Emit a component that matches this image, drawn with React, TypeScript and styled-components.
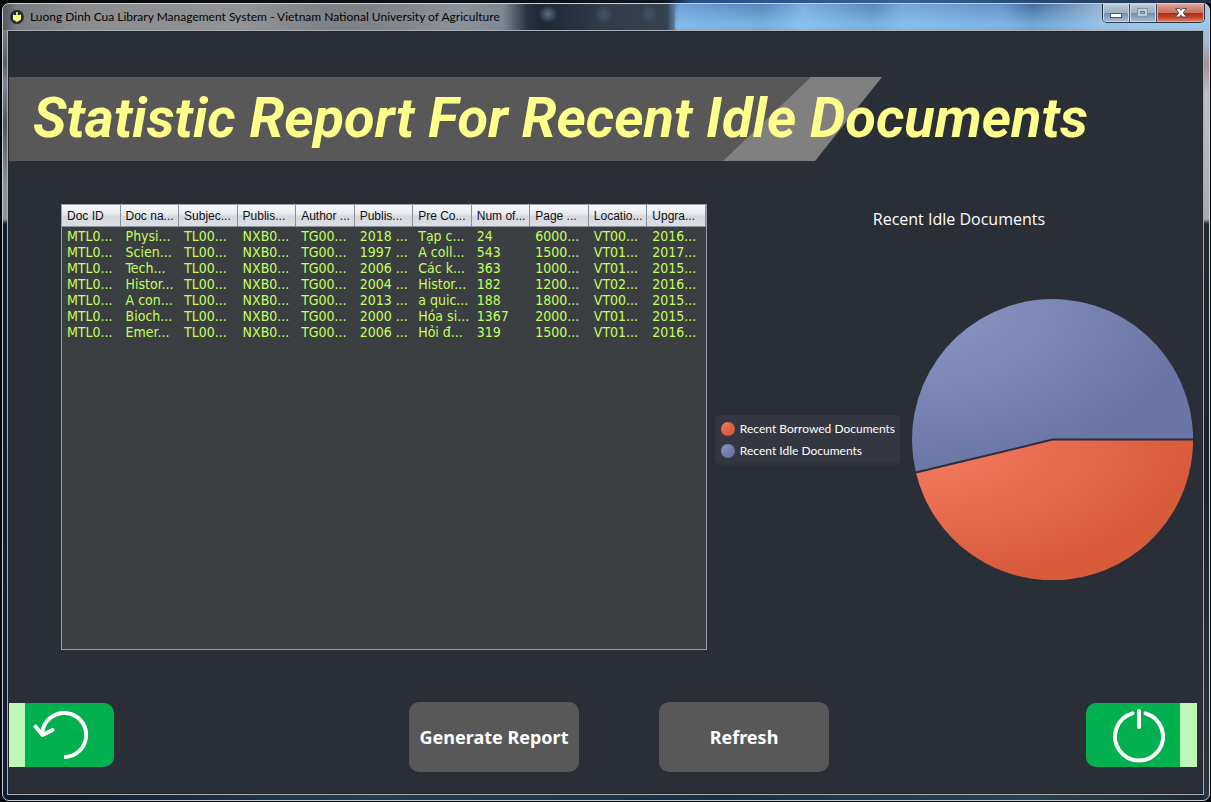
import React from "react";
import styled, { createGlobalStyle } from "styled-components";

const GlobalStyle = createGlobalStyle`
  * { box-sizing: border-box; }
  html, body { margin: 0; padding: 0; background: #0a0d12; }
  button { font: inherit; border: 0; padding: 0; margin: 0; cursor: pointer; }
`;

const Desktop = styled.div`
  display: flex;
  min-height: 100vh;
  padding: 3px 1px 1px 2px;
  background: linear-gradient(90deg, #080808 0, #10161e 55%, #2a5080 57%, #365f92 75%, #1c3048 100%) top / 100% 3px no-repeat, #05080c;
`;

const Window = styled.div`
  flex: 1;
  min-width: 0;
  display: flex;
  flex-direction: column;
  padding: 0 5px 5px 4px;
  border: 1px solid #c9ced3;
  border-radius: 7px;
  background:
    linear-gradient(#8f969d 0, #555d66 60px, #7d8792 78px, #50565d 120px, #8a9198 180px, #8d949b 215px, #10202e 220px, #0e1e30 100%) left / 5px 100% no-repeat,
    linear-gradient(#a9cdea 0, #9fb9d0 40px, #a88c96 60px, #bcc0c5 90px, #a6abb0 215px, #1f2a33 220px, #18252e 60%, #2b3740 100%) right / 5px 100% no-repeat,
    linear-gradient(90deg, #0c1b2b, #243c50 30%, #123244 60%, #2a4252 85%, #1a2833) bottom / 100% 6px no-repeat,
    #24313e;
`;

const TitleBar = styled.header`
  display: flex;
  align-items: flex-start;
  height: 26px;
  margin: 0 -5px 0 -4px;
  padding-left: 7px;
  border-radius: 6px 6px 0 0;
  background:
    radial-gradient(ellipse 10px 9px at 545px 10px, #5a7085, transparent),
    radial-gradient(ellipse 9px 10px at 601px 10px, #425564, transparent),
    radial-gradient(ellipse 9px 10px at 646px 10px, #425564, transparent),
    linear-gradient(transparent 0, #8fd0fa99 80%, #8fc3ec99 100%) 672px 0 / 100% 100% no-repeat,
    linear-gradient(90deg, #555a5f 0, #797c80 14px, #8a8c8f 70px, #919396 240px, #7d8084 330px, #82878d 400px, #8b9299 460px, #7c8791 500px, #273440 524px, #1c2833 540px, #303d49 600px, #36434f 664px, #6f9fd4 676px, #5586b9 760px, #7eaee0 800px, #5686b8 870px, #77a6d8 900px, #648fc5 1000px, #446f9e 1030px, #9fb3cf 1100px, #a8c4de 100%);
`;

const AppIcon = styled.svg`
  flex: none;
  width: 14px;
  height: 14px;
  margin-top: 6px;
`;

const WindowTitle = styled.span`
  flex: 1;
  min-width: 0;
  margin: 4px 0 0 6px;
  overflow: hidden;
  white-space: nowrap;
  color: #050505;
  font: 12px/18px Lato, "Open Sans", sans-serif;
`;

const WindowControls = styled.div`
  display: flex;
  margin-right: 4px;
  height: 19px;
  border: 1px solid #2c3846;
  border-top: 0;
  border-radius: 0 0 5px 5px;
  overflow: hidden;
`;

const ControlButton = styled.button<{ $kind: "plain" | "close" }>`
  display: flex;
  align-items: center;
  justify-content: center;
  width: ${(p) => (p.$kind === "close" ? 47 : 27)}px;
  box-shadow: inset 0 0 0 1px ${(p) => (p.$kind === "close" ? "#e2a294" : "#c9d7e4")};
  border-right: ${(p) => (p.$kind === "close" ? "0" : "1px solid #3f5062")};
  background: ${(p) =>
    p.$kind === "close"
      ? "linear-gradient(#dda194 0, #cb705f 48%, #ad2e18 52%, #c8452b 75%, #e08a63 100%)"
      : "linear-gradient(#b9c8d7 0, #9eb1c5 48%, #7290ad 52%, #a5bfd6 100%)"};
`;

const Client = styled.main`
  flex: 1;
  display: flex;
  flex-direction: column;
  border: 1px solid #a9afb5;
  background: #2a2e36;
  box-shadow: inset 0 0 0 1px #22252c;
`;

const Banner = styled.div`
  position: relative;
  z-index: 0;
  height: 84px;
  margin: 46px 0 0 1px;
  padding-left: 24px;
  &::before, &::after {
    content: "";
    position: absolute;
    z-index: -1;
    top: 0;
    left: 0;
    height: 100%;
    width: 873px;
    background: #808080;
    clip-path: polygon(0 0, 873px 0, 806px 100%, 0 100%);
  }
  &::after {
    background: #585858;
    clip-path: polygon(0 0, 802px 0, 714px 100%, 0 100%);
  }
`;

const Heading = styled.h1`
  margin: 0;
  white-space: nowrap;
  color: #ffff8c;
  font: italic 700 56px/82px Roboto, "Open Sans", sans-serif;
`;

const Content = styled.div`
  flex: 1;
  display: flex;
  gap: 8px;
  margin: 43px 10px 52px 53px;
`;

const TablePane = styled.div`
  flex: 645 1 0;
  min-width: 0;
  min-height: 440px;
  border: 1px solid #9a9ea9;
  background: #3c3f41;
`;

const DataTable = styled.table`
  width: 100%;
  table-layout: fixed;
  border-collapse: separate;
  border-spacing: 0;
`;

const HeadCell = styled.th`
  height: 22px;
  padding: 0 0 0 5px;
  white-space: nowrap;
  text-align: left;
  color: #101010;
  font: 12px/20px "Liberation Sans", Arial, sans-serif;
  border-right: 1px solid #8b8f98;
  border-bottom: 1px solid #8b8f98;
  background: linear-gradient(#fbfbfd 0, #e6e7ec 48%, #d6d8df 52%, #dcdee6 100%);
`;

const Cell = styled.td`
  height: 16px;
  padding: 0 0 0 5px;
  white-space: nowrap;
  color: #c0ff60;
  font: 14px/16px "DejaVu Sans Condensed", "DejaVu Sans", sans-serif;
`;

const Spacer = styled.tbody`
  td { height: 1px; padding: 0; }
`;

const ChartPane = styled.section`
  flex: 479 1 0;
  min-width: 0;
  display: flex;
  flex-direction: column;
`;

const ChartTitle = styled.h2`
  margin: 3px 0 0 10px;
  text-align: center;
  color: #fff;
  font: 400 16px/24px "Open Sans", "Noto Sans", sans-serif;
`;

const ChartBody = styled.div`
  flex: 1;
  display: flex;
  align-items: center;
  gap: 12px;
  padding-bottom: 2px;
`;

const Legend = styled.ul`
  flex: none;
  width: 185px;
  margin: 0;
  padding: 3px 0 3px 6px;
  list-style: none;
  border-radius: 3px;
  background: #343741;
  box-shadow: inset 0 -3px 0 #30333c;
`;

const LegendItem = styled.li`
  display: flex;
  align-items: center;
  gap: 5px;
  color: #fff;
  white-space: nowrap;
  font: 12px/22px Lato, "Open Sans", sans-serif;
`;

const Dot = styled.span<{ $from: string; $to: string }>`
  flex: none;
  width: 14px;
  height: 14px;
  border-radius: 50%;
  background: radial-gradient(circle at 0 0, ${(p) => p.$from}, ${(p) => p.$to} 14px);
`;

const Pie = styled.svg`
  flex: 1;
  min-width: 0;
`;

const Footer = styled.footer`
  display: grid;
  grid-template-columns: 25fr auto 23fr;
  align-items: start;
  margin: 0 6px 22px 1px;
`;

const Actions = styled.div`
  display: flex;
  gap: 80px;
`;

const ActionButton = styled.button`
  width: 170px;
  height: 70px;
  border-radius: 10px;
  background: #585858;
  color: #fff;
  font: 700 18px/24px "Noto Sans", "Open Sans", sans-serif;
  white-space: nowrap;
`;

const EdgeButton = styled.button<{ $side: "left" | "right" }>`
  display: flex;
  justify-self: ${(p) => (p.$side === "left" ? "start" : "end")};
  width: ${(p) => (p.$side === "left" ? 105 : 111)}px;
  height: 64px;
  margin-top: 1px;
  overflow: hidden;
  background: #02b04f;
  ${(p) =>
    p.$side === "left"
      ? "border-left: 16px solid #bcf7b8; border-radius: 0 10px 10px 0;"
      : "border-right: 17px solid #bcf7b8; border-radius: 10px 0 0 10px;"}
`;

const columns = ["Doc ID", "Doc na...", "Subjec...", "Publis...", "Author ...", "Publis...", "Pre Co...", "Num of...", "Page ...", "Locatio...", "Upgra..."];

const rows = [
  ["MTL0...", "Physi...", "TL00...", "NXB0...", "TG00...", "2018 ...", "Tạp c...", "24", "6000...", "VT00...", "2016..."],
  ["MTL0...", "Scien...", "TL00...", "NXB0...", "TG00...", "1997 ...", "A coll...", "543", "1500...", "VT01...", "2017..."],
  ["MTL0...", "Tech...", "TL00...", "NXB0...", "TG00...", "2006 ...", "Các k...", "363", "1000...", "VT01...", "2015..."],
  ["MTL0...", "Histor...", "TL00...", "NXB0...", "TG00...", "2004 ...", "Histor...", "182", "1200...", "VT02...", "2016..."],
  ["MTL0...", "A con...", "TL00...", "NXB0...", "TG00...", "2013 ...", "a quic...", "188", "1800...", "VT00...", "2015..."],
  ["MTL0...", "Bioch...", "TL00...", "NXB0...", "TG00...", "2000 ...", "Hóa si...", "1367", "2000...", "VT01...", "2015..."],
  ["MTL0...", "Emer...", "TL00...", "NXB0...", "TG00...", "2006 ...", "Hỏi đ...", "319", "1500...", "VT01...", "2016..."],
];

const series = [
  { name: "Recent Borrowed Documents", from: "#f67d63", to: "#d85b3c" },
  { name: "Recent Idle Documents", from: "#8d9ac8", to: "#6976a6" },
];

export default function App() {
  return (
    <Desktop>
      <GlobalStyle />
      <Window>
        <TitleBar>
          <AppIcon viewBox="0 0 14 14" aria-hidden="true">
            <circle cx="7" cy="7" r="6.9" fill="#262a35" />
            <path d="M3 4.400l2.400.8V3h3v2.200L11 4.400v5.200L7 11.900 3 9.600z" fill="#ffff8c" />
            <path d="M5 2.500v2.500h4V2.500z" fill="#262a35" />
            <path d="M6.200 2h1.600v3.400H6.200z" fill="#ffff8c" />
          </AppIcon>
          <WindowTitle>Luong Dinh Cua Library Management System - Vietnam National University of Agriculture</WindowTitle>
          <WindowControls>
            <ControlButton $kind="plain" aria-label="Minimize">
              <svg width="14" height="14" viewBox="0 0 14 14">
                <rect x="1.500" y="7.500" width="11" height="4" fill="#fff" stroke="#4a5566" />
              </svg>
            </ControlButton>
            <ControlButton $kind="plain" aria-label="Maximize">
              <svg width="14" height="14" viewBox="0 0 14 14">
                <rect x="1.500" y="2.500" width="10" height="8" fill="#bccbd9" stroke="#8295a8" />
                <rect x="4.500" y="5.500" width="4" height="2" fill="#8ba3ba" stroke="#71869c" />
              </svg>
            </ControlButton>
            <ControlButton $kind="close" aria-label="Close">
              <svg width="14" height="14" viewBox="0 0 14 14">
                <path d="M1.500 2.500h4L7 4.400 8.500 2.500h4L9.200 6.750 12.500 11h-4L7 9.100 5.500 11h-4l3.300-4.250z" fill="#fff" stroke="#4c4f63" />
              </svg>
            </ControlButton>
          </WindowControls>
        </TitleBar>
        <Client>
          <Banner>
            <Heading>Statistic Report For Recent Idle Documents</Heading>
          </Banner>
          <Content>
            <TablePane>
              <DataTable>
                <thead>
                  <tr>{columns.map((c, i) => <HeadCell key={i} scope="col">{c}</HeadCell>)}</tr>
                </thead>
                <Spacer aria-hidden="true"><tr><td colSpan={11} /></tr></Spacer>
                <tbody>
                  {rows.map((r, i) => (
                    <tr key={i}>{r.map((c, j) => <Cell key={j}>{c}</Cell>)}</tr>
                  ))}
                </tbody>
              </DataTable>
            </TablePane>
            <ChartPane>
              <ChartTitle>Recent Idle Documents</ChartTitle>
              <ChartBody>
                <Legend>
                  {series.map((s) => (
                    <LegendItem key={s.name}><Dot $from={s.from} $to={s.to} />{s.name}</LegendItem>
                  ))}
                </Legend>
                <Pie viewBox="0 0 281 281" role="img" aria-label="Share of borrowed and idle documents">
                  <defs>
                    {series.map((s, i) => (
                      <radialGradient key={i} id={`slice${i}`} cx="0" cy="0" r="1" fx="0" fy="0">
                        <stop offset="0" stopColor={s.from} />
                        <stop offset="1" stopColor={s.to} />
                      </radialGradient>
                    ))}
                  </defs>
                  <path d="M140.500 140.500H281A140.500 140.500 0 0 1 3.900 173.500Z" fill="url(#slice0)" />
                  <path d="M140.500 140.500L3.900 173.500A140.500 140.500 0 1 1 281 140.500Z" fill="url(#slice1)" />
                  <path d="M281 140.500H140.500L3.900 173.500" fill="none" stroke="#2a2e36" strokeWidth="2" />
                </Pie>
              </ChartBody>
            </ChartPane>
          </Content>
          <Footer>
            <EdgeButton $side="left" aria-label="Back">
              <svg width="89" height="64" viewBox="16 0 89 64" fill="none" stroke="#fff" strokeWidth="4">
                <path d="M55 54A22 22 0 1 0 33.200 30" />
                <path d="M26.500 23.500l7 8.500 10-5" strokeLinecap="round" strokeLinejoin="round" />
              </svg>
            </EdgeButton>
            <Actions>
              <ActionButton>Generate Report</ActionButton>
              <ActionButton>Refresh</ActionButton>
            </Actions>
            <EdgeButton $side="right" aria-label="Exit">
              <svg width="94" height="64" viewBox="0 0 94 64" fill="none" stroke="#fff" strokeWidth="4" strokeLinecap="round">
                <path d="M46.500 10.400A24 24 0 1 0 59.500 10.400" />
                <path d="M53 8v16" />
              </svg>
            </EdgeButton>
          </Footer>
        </Client>
      </Window>
    </Desktop>
  );
}
